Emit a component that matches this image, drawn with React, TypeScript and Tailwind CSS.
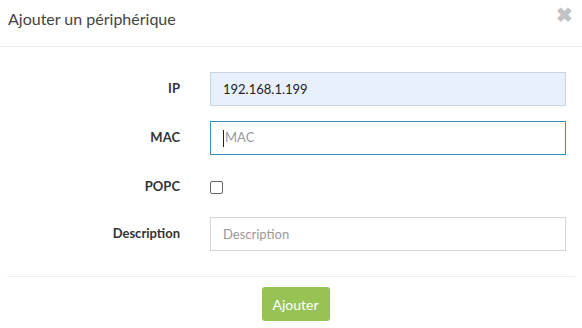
export default function App() {
  return (
    <div className="w-[582px] h-[328px] bg-white font-['Lato',_'Liberation_Sans',_sans-serif] text-[#333]">
      <div className="h-[47px] border-b border-[#eeeeee] flex items-start justify-between pl-[8px] pr-[8px]">
        <p className="text-[16px] text-[#444] mt-[8px] leading-[22px]">Ajouter un périphérique</p>
        <span className="text-[20px] font-bold text-[#c2c2c2] leading-none mt-[4px] mr-[1px]">✖</span>
      </div>

      <div className="pt-[25px]">
        <div className="flex items-center h-[34px] mb-[15px]">
          <label className="w-[180px] text-right text-[13px] font-bold">IP</label>
          <input
            type="text"
            defaultValue="192.168.1.199"
            className="ml-[30px] w-[356px] h-[34px] px-[12px] text-[13px] text-[#222] bg-[#e8f0fe] border border-[#cdd3dc] outline-none"
          />
        </div>
        <div className="flex items-center h-[34px] mb-[15px]">
          <label className="w-[180px] text-right text-[13px] font-bold">MAC</label>
          <div className="ml-[30px] w-[356px] h-[34px] px-[12px] border border-[#3c8dbc] flex items-center text-[13px] text-[#999]">
            <span className="w-px h-[17px] bg-[#222] mr-px"></span>MAC
          </div>
        </div>
        <div className="flex items-center h-[34px] mb-[13px]">
          <label className="w-[180px] text-right text-[13px] font-bold">POPC</label>
          <span className="ml-[30px] w-[13px] h-[13px] border border-[#666] rounded-[2px] bg-white"></span>
        </div>
        <div className="flex items-center h-[34px]">
          <label className="w-[180px] text-right text-[13px] font-bold">Description</label>
          <input
            type="text"
            placeholder="Description"
            className="ml-[30px] w-[356px] h-[34px] px-[12px] text-[13px] text-[#222] placeholder:text-[#999] border border-[#d2d6de] outline-none"
          />
        </div>
      </div>

      <div className="mt-[25px] mx-[7px] border-t border-[#eeeeee] flex justify-center pt-[10px] pl-[9px]">
        <button className="w-[68px] h-[34px] bg-[#97c355] rounded-[3px] text-white text-[14px]">Ajouter</button>
      </div>
    </div>
  );
}
